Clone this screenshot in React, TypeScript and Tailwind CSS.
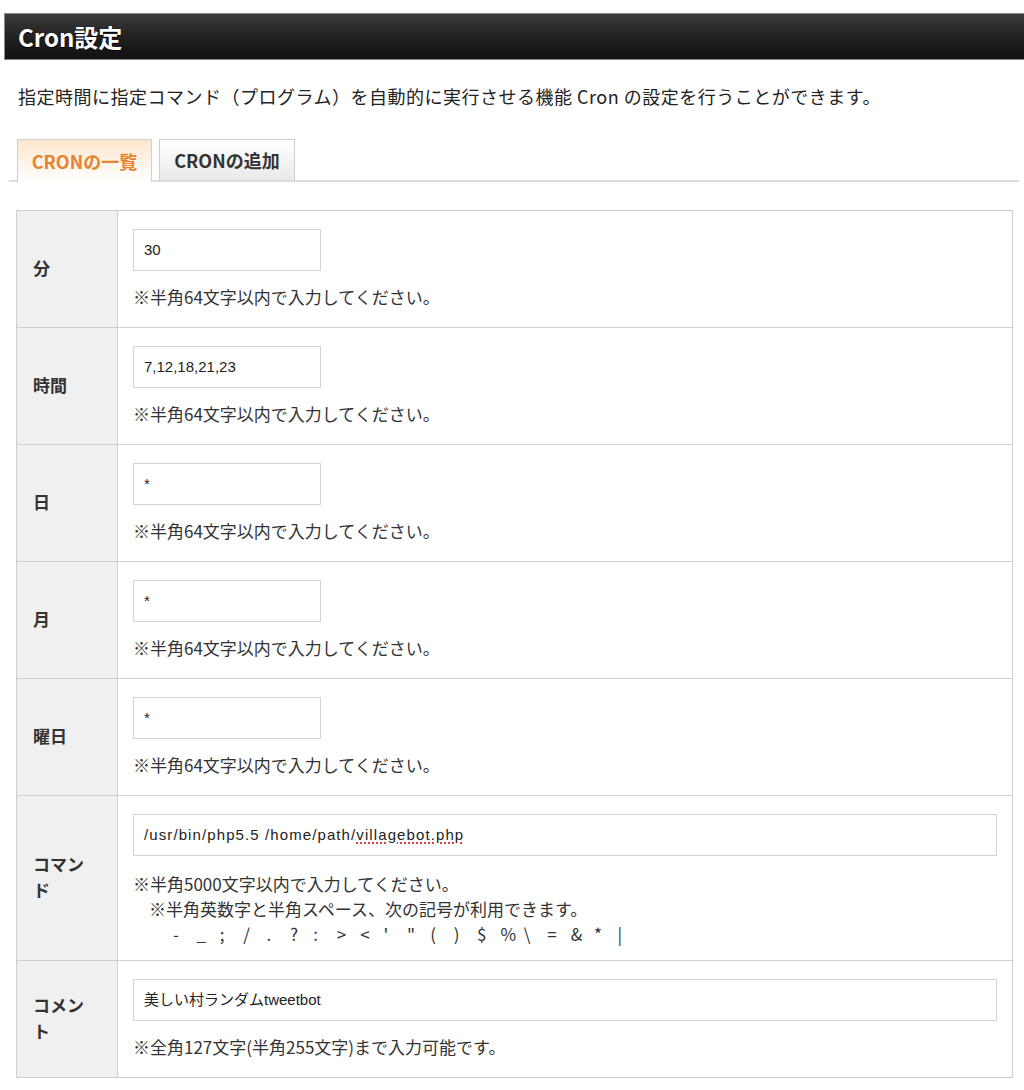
const jp = "font-['Noto_Sans_CJK_JP',sans-serif]"
const field = "font-['Liberation_Sans','Noto_Sans_CJK_JP',sans-serif]"

const NOTE64 = '※半角64文字以内で入力してください。'

const symbols = ['-', '_', ';', '/', '.', '?', ':', '>', '<', "'", '"', '(', ')', '$', '%', '\\', '=', '&', '*', '|']

function Row({ label, children, last, tight }: { label: string; children: React.ReactNode; last?: boolean; tight?: boolean }) {
  return (
    <div className={`flex ${last ? '' : 'border-b border-[#cfcfcf]'}`}>
      <div className="w-[101px] shrink-0 bg-[#f0f0f0] border-r border-[#cfcfcf] flex items-center pl-[16px] pb-[3px]">
        <div className="w-[56px] text-[17px] leading-[26px] font-bold text-[#333]">{label}</div>
      </div>
      <div className={`flex-1 pl-[15px] pr-[15px] pt-[18px] ${tight ? 'pb-[14px]' : 'pb-[18px]'}`}>{children}</div>
    </div>
  )
}

function Box({ wide, children }: { wide?: boolean; children: React.ReactNode }) {
  return (
    <div
      className={`${wide ? 'w-full' : 'w-[188px]'} h-[42px] border border-[#d4d4d4] bg-white flex items-center pl-[10px] text-[15px] text-[#222] ${field}`}
    >
      {children}
    </div>
  )
}

function Note({ children }: { children: React.ReactNode }) {
  return <div className="mt-[13px] text-[17px] leading-[25px] text-[#333]">{children}</div>
}

export default function App() {
  return (
    <div className={`w-[1024px] min-h-[1090px] bg-white pt-[13px] ${jp}`}>
      <div className="ml-[4px] h-[47px] border border-[#8a8a8a] border-r-0 bg-gradient-to-b from-[#3c3c3c] via-[#222] to-[#111] flex items-center pl-[13px]">
        <h1 className="text-[24px] font-bold text-white [text-shadow:0_1px_1px_#000]">Cron設定</h1>
      </div>

      <p className="mt-[23px] ml-[18px] text-[18px] leading-[26px] tracking-[0.5px] text-[#222]">
        指定時間に指定コマンド（プログラム）を自動的に実行させる機能 Cron の設定を行うことができます。
      </p>

      <div className="mt-[30px] ml-[9px] mr-[5px] border-b-2 border-[#dcdcdc] pl-[8px] flex gap-[7px] items-end">
        <div className="-mb-[2px] w-[135px] h-[43px] border border-b-0 border-[#cfcfcf] bg-gradient-to-b from-[#fde6cf] to-white flex items-center justify-center text-[18px] font-bold text-[#e8832e]">
          CRONの一覧
        </div>
        <div className="w-[136px] h-[41px] border border-b-0 border-[#cfcfcf] bg-gradient-to-b from-white to-[#e9e9e9] flex items-center justify-center text-[18px] font-bold text-[#333]">
          CRONの追加
        </div>
      </div>

      <div className="mt-[28px] ml-[16px] w-[997px] border border-[#cfcfcf]">
        <Row label="分">
          <Box>30</Box>
          <Note>{NOTE64}</Note>
        </Row>
        <Row label="時間">
          <Box>7,12,18,21,23</Box>
          <Note>{NOTE64}</Note>
        </Row>
        <Row label="日">
          <Box>*</Box>
          <Note>{NOTE64}</Note>
        </Row>
        <Row label="月">
          <Box>*</Box>
          <Note>{NOTE64}</Note>
        </Row>
        <Row label="曜日">
          <Box>*</Box>
          <Note>{NOTE64}</Note>
        </Row>
        <Row label="コマンド" tight>
          <Box wide>
            <span className="tracking-[1.1px]">
              /usr/bin/php5.5 /home/path/
              <span className="underline decoration-dotted decoration-[#e04040] decoration-2 underline-offset-[3px]">villagebot.php</span>
            </span>
          </Box>
          <div className="mt-[15px] text-[17px] leading-[25px] text-[#333]">
            <div>※半角5000文字以内で入力してください。</div>
            <div className="pl-[16px]">※半角英数字と半角スペース、次の記号が利用できます。</div>
            <div className="pl-[40px] flex">
              {symbols.map((s, i) => (
                <span key={i} className="w-[23.4px] shrink-0">
                  {s}
                </span>
              ))}
            </div>
          </div>
        </Row>
        <Row label="コメント" last>
          <Box wide>美しい村ランダムtweetbot</Box>
          <Note>※全角127文字(半角255文字)まで入力可能です。</Note>
        </Row>
      </div>
    </div>
  )
}
